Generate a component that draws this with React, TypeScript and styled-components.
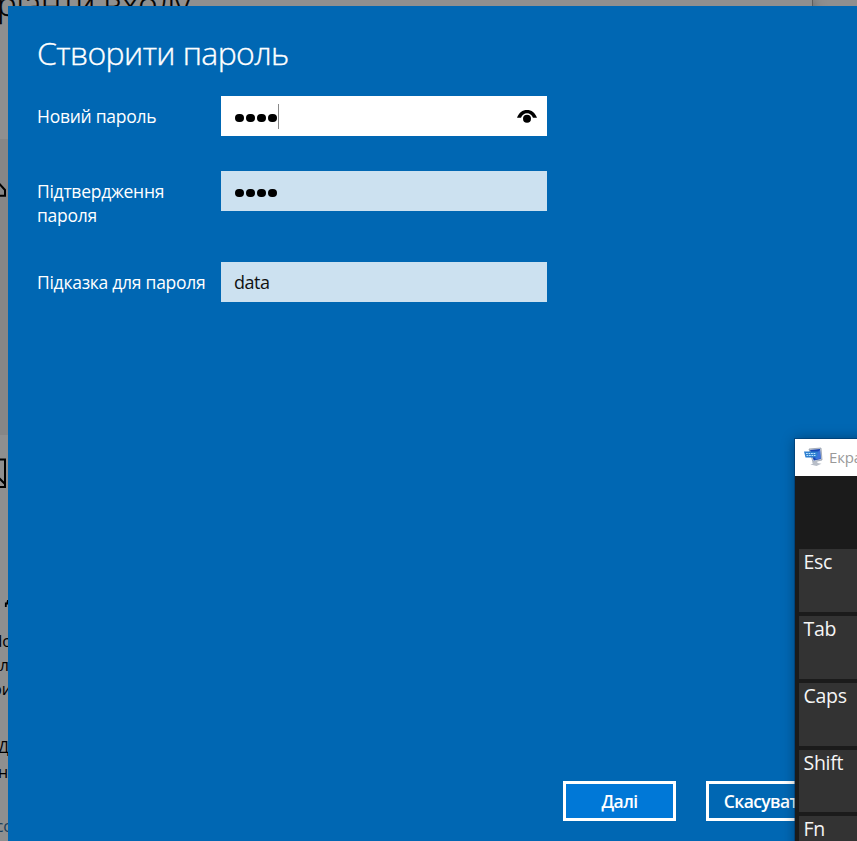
import React from 'react';
import styled, { createGlobalStyle } from 'styled-components';

const Global = createGlobalStyle`
  * { box-sizing: border-box; }
  html, body { margin: 0; height: 100%; overflow: hidden; }
  body { font-family: "Open Sans", "Noto Sans", sans-serif; }
`;

const Screen = styled.div`
  position: relative;
  width: 857px;
  height: 841px;
  overflow: hidden;
  background: #8f8f8f;
`;

/* Dimmed settings window behind the dialog */
const Settings = styled.div`
  width: 813px;
  height: 841px;
  display: flex;
  flex-direction: column;
  overflow: hidden;
  border-right: 1px solid #5e5e5e;
  background: #8f8f8f;
  box-shadow: 0 0 12px rgba(0, 0, 0, 0.35);
`;

const SettingsTitle = styled.div`
  height: 139px;
  flex: none;
  margin-left: -3px;
  font-size: 33px;
  font-weight: 300;
  line-height: 40px;
  letter-spacing: -0.2px;
  color: #000;
  -webkit-text-stroke: 0.4px #000;
  white-space: nowrap;
  span { display: block; margin-top: -16px; }
`;

const Band = styled.div<{ $h: number; $shade?: boolean; $top: number }>`
  flex: none;
  width: 8px;
  height: ${p => p.$h}px;
  padding-top: ${p => p.$top}px;
  background: ${p => (p.$shade ? '#868686' : 'transparent')};
  svg { display: block; }
`;

const Fragment = styled.div<{ $h: number; $out?: number; $color?: string; $line?: boolean }>`
  flex: none;
  width: ${p => 8 + (p.$out ?? 0)}px;
  height: ${p => p.$h}px;
  display: flex;
  justify-content: flex-end;
  overflow: hidden;
  white-space: nowrap;
  font-size: 16px;
  line-height: 24px;
  color: ${p => p.$color ?? '#000'};
  text-decoration: ${p => (p.$line ? 'underline' : 'none')};
`;

const Dialog = styled.main`
  position: absolute;
  left: 8px;
  top: 6px;
  right: 0;
  bottom: 0;
  padding: 25px 0 20px 29px;
  display: flex;
  flex-direction: column;
  background: #0067b3;
  color: #fff;
`;

const Heading = styled.h1`
  margin: 0 0 21px;
  height: 44px;
  font-size: 32px;
  line-height: 44px;
  font-weight: 300;
  letter-spacing: -0.6px;
  -webkit-text-stroke: 0.35px #fff;
  white-space: nowrap;
`;

const Form = styled.div`
  display: grid;
  grid-template-columns: 184px 326px;
  grid-template-rows: 40px 56px 40px;
  row-gap: 35px;
`;

const Label = styled.label`
  padding-top: 8px;
  font-size: 17.5px;
  line-height: 24px;
  letter-spacing: -0.27px;
  white-space: nowrap;
`;

const Field = styled.div<{ $active?: boolean }>`
  height: 40px;
  padding: 0 10px 0 13px;
  display: flex;
  align-items: center;
  background: ${p => (p.$active ? '#fff' : '#cce1f0')};
  color: #111;
  font-size: 18px;
  letter-spacing: -0.5px;
  svg { display: block; margin-left: auto; }
`;

const Dots = styled.div`
  display: flex;
  gap: 2.6px;
  padding: 4px 0 0 1px;
`;

const Dot = styled.span`
  width: 8.5px;
  height: 8.5px;
  border-radius: 50%;
  background: #000;
`;

const Caret = styled.span`
  width: 1px;
  height: 25px;
  margin: 0 0 0 1px;
  background: #888;
`;

const Actions = styled.div`
  display: flex;
  gap: 30px;
  margin-top: auto;
  padding-left: 526px;
`;

const Button = styled.button<{ $primary?: boolean }>`
  flex: none;
  width: ${p => (p.$primary ? 113 : 121)}px;
  height: 40px;
  padding: 1px 0 0;
  border: 3px solid #fff;
  background: ${p => (p.$primary ? '#0078d7' : 'transparent')};
  color: #fff;
  font: 600 17.5px/33px "Open Sans", "Noto Sans", sans-serif;
  letter-spacing: -0.6px;
  white-space: nowrap;
`;

const Keyboard = styled.aside`
  position: absolute;
  left: 795px;
  top: 439px;
  width: 400px;
  height: 500px;
  background: #1b1b1b;
  box-shadow: 0 0 0 1px rgba(0, 45, 90, 0.45), 0 0 12px rgba(0, 0, 0, 0.35);
`;

const TitleBar = styled.header`
  height: 37px;
  padding: 0 0 2px 9px;
  display: flex;
  align-items: center;
  gap: 5px;
  background: #fff;
  color: #999;
  font-size: 15px;
  letter-spacing: -0.2px;
`;

const Keys = styled.div`
  display: grid;
  gap: 4px;
  grid-template-rows: 63px 63px 63px 62px 62px;
  padding: 73px 0 0 4px;
`;

const Key = styled.div`
  padding: 0 0 0 4.5px;
  background: #333;
  color: #f5f5f5;
  font-size: 19.5px;
  line-height: 26px;
  letter-spacing: -0.3px;
`;

const EyeIcon = () => (
  <svg width="20" height="14" viewBox="0 0 20 14">
    <path d="M0 8.800C1.900 3.600 5.400 1 10 1s8.100 2.600 10 7.800h-4C14.700 5.700 12.700 4.200 10 4.200S5.300 5.700 4 8.800z" fill="#000" />
    <circle cx="10" cy="9.700" r="4" fill="#000" />
  </svg>
);

const KeyboardIcon = () => (
  <svg width="20" height="20" viewBox="0 0 20 20">
    <path d="M5 2l12-1 1 12-9 2z" fill="#c9d0da" stroke="#8993a3" strokeWidth=".7" />
    <path d="M6 3l10-1 .8 10-7 1.500z" fill="#1743b4" />
    <path d="M11 7l5-4 .7 8.500-5.200 1z" fill="#3e72dc" />
    <path d="M8 15l5-1.500 .5 2.500 4 .8-5 2.200-6-1.600 2.500-.8z" fill="#b8bec8" />
    <path d="M0 4.500h14l-1 6H1.500z" fill="#2f7fd0" />
    <path d="M2 6.500h10M2.500 8.500h9" stroke="#b9e3ff" strokeWidth="1.100" strokeDasharray="1.800 .7" />
  </svg>
);

const DotRow = () => (
  <Dots>{[0, 1, 2, 3].map(i => <Dot key={i} />)}</Dots>
);

export default function App() {
  return (
    <>
      <Global />
      <Screen>
        <Settings>
          <SettingsTitle><span>ріанти входу</span></SettingsTitle>
          <Band $h={296} $shade $top={43}>
            <svg width="8" height="16" viewBox="0 0 8 16">
              <path d="M-1 1.500L5 8v5.700H-1" fill="none" stroke="#000" strokeWidth="2" />
            </svg>
          </Band>
          <Band $h={153} $top={23}>
            <svg width="8" height="31" viewBox="0 0 8 31">
              <path d="M-1 1.500H5V29H-1M-1 20l6 6" fill="none" stroke="#000" strokeWidth="2" />
            </svg>
          </Band>
          <Band $h={41} $top={12}>
            <svg width="8" height="10" viewBox="0 0 8 10">
              <path d="M5.800 7V3.500H7.200L8 0" fill="none" stroke="#000" strokeWidth="1.800" />
            </svg>
          </Band>
          <Fragment $h={24} $out={4}>do</Fragment>
          <Fragment $h={24} $out={1}>л</Fragment>
          <Fragment $h={58} $out={4}>ри</Fragment>
          <Fragment $h={25} $out={1} $line>Д</Fragment>
          <Fragment $h={54}>н</Fragment>
          <Fragment $h={26} $out={3} $color="#173e5c">сс</Fragment>
        </Settings>

        <Dialog>
          <Heading>Створити пароль</Heading>
          <Form>
            <Label>Новий пароль</Label>
            <Field $active><DotRow /><Caret /><EyeIcon /></Field>
            <Label>Підтвердження<br />пароля</Label>
            <Field><DotRow /></Field>
            <Label>Підказка для пароля</Label>
            <Field>data</Field>
          </Form>
          <Actions>
            <Button $primary>Далі</Button>
            <Button>Скасувати</Button>
          </Actions>
        </Dialog>

        <Keyboard>
          <TitleBar><KeyboardIcon />Екранна клавіатура</TitleBar>
          <Keys>
            {['Esc', 'Tab', 'Caps', 'Shift', 'Fn'].map(k => <Key key={k}>{k}</Key>)}
          </Keys>
        </Keyboard>
      </Screen>
    </>
  );
}
